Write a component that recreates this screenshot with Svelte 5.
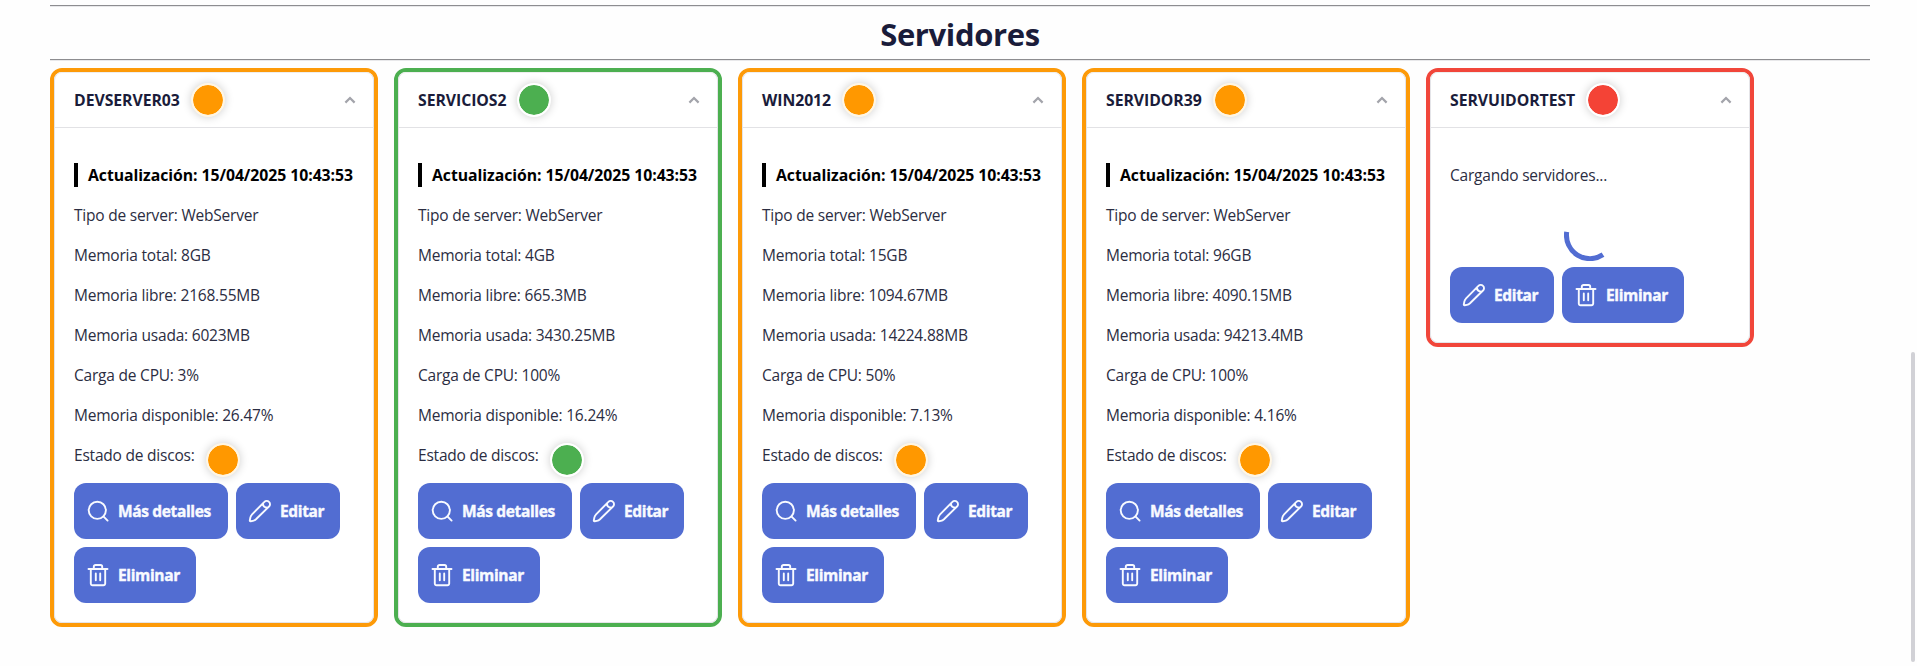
<script>
  const updated = '15/04/2025 10:43:53';
  const servers = [
    { name: 'DEVSERVER03', status: 'warn', total: '8GB', free: '2168.55MB', used: '6023MB', cpu: '3%', avail: '26.47%' },
    { name: 'SERVICIOS2', status: 'ok', total: '4GB', free: '665.3MB', used: '3430.25MB', cpu: '100%', avail: '16.24%' },
    { name: 'WIN2012', status: 'warn', total: '15GB', free: '1094.67MB', used: '14224.88MB', cpu: '50%', avail: '7.13%' },
    { name: 'SERVIDOR39', status: 'warn', total: '96GB', free: '4090.15MB', used: '94213.4MB', cpu: '100%', avail: '4.16%' },
    { name: 'SERVUIDORTEST', status: 'error', loading: true }
  ];
</script>

{#snippet button(kind, label)}
  <button class="btn {kind}">
    <svg viewBox="0 0 24 24" width="24" height="24">
      {#if kind === 'search'}
        <circle cx="11.3" cy="11.3" r="8.6" />
        <path d="M17.4 17.4 21.6 21.6" />
      {:else if kind === 'edit'}
        <path d="M16.4 2.9a3.1 3.1 0 0 1 4.6 0a3.1 3.1 0 0 1 0 4.6L8 20.3Q6.6 21.6 4.9 21.9L2.7 22.3Q1.7 22.4 1.8 21.4L2.4 18.4Q2.8 16.6 4.1 15.3Z M15 4.3Q14.9 8.6 19.6 8.8" />
      {:else}
        <path d="M2.5 6h19M4.8 6v14.6a1.7 1.7 0 0 0 1.7 1.7h11a1.7 1.7 0 0 0 1.7-1.7V6M7.8 6V3.7a1.7 1.7 0 0 1 1.7-1.7h5a1.7 1.7 0 0 1 1.7 1.7V6M9.8 10.4v6.8M14.2 10.4v6.8" />
      {/if}
    </svg>
    <span>{label}</span>
  </button>
{/snippet}

<main>
  <hr />
  <h1>Servidores</h1>
  <hr />
  <div class="grid">
    {#each servers as s}
      <section class="card {s.status}">
        <div class="inner">
          <header>
            <span class="name">{s.name}</span>
            <i class="dot"></i>
            <svg class="chevron" viewBox="0 0 12 8" width="12" height="8"><path d="M1.4 6.6 6 2l4.6 4.6" /></svg>
          </header>
          <div class="body">
            {#if s.loading}
              <p>Cargando servidores...</p>
              <div class="spinner">
                <svg viewBox="0 0 52 52" width="52" height="52"><path d="M2.7 22.8A23.5 23.5 0 0 0 39 45.7" /></svg>
              </div>
            {:else}
              <p class="update"><span>Actualización: {updated}</span></p>
              <p>Tipo de server: WebServer</p>
              <p>Memoria total: {s.total}</p>
              <p>Memoria libre: {s.free}</p>
              <p>Memoria usada: {s.used}</p>
              <p>Carga de CPU: {s.cpu}</p>
              <p>Memoria disponible: {s.avail}</p>
              <p class="disks">Estado de discos: <i class="dot"></i></p>
            {/if}
            <div class="actions">
              {#if !s.loading}{@render button('search', 'Más detalles')}{/if}
              {@render button('edit', 'Editar')}
              {@render button('trash', 'Eliminar')}
            </div>
          </div>
        </div>
      </section>
    {/each}
  </div>
  <div class="scrollbar"></div>
</main>

<style>
  :global(body) { background: #fefefe; overflow: hidden; }
  * { box-sizing: border-box; }
  main {
    height: 666px;
    padding: 5px 47px 0 50px;
    font-family: 'Segoe UI', 'Open Sans', 'Noto Sans', sans-serif;
    font-size: 16px;
    color: #2b2d42;
  }
  hr {
    height: 2px;
    margin: 0;
    border: 0;
    border-top: 1px solid #8d8d90;
    border-bottom: 1px solid #e8e8ea;
  }
  h1 {
    margin: 0;
    height: 52px;
    line-height: 54px;
    text-align: center;
    font-size: 31px;
    font-weight: 700;
    letter-spacing: -0.35px;
    color: #1a1c3a;
  }
  .grid { display: flex; align-items: flex-start; gap: 16px; margin-top: 7px; }
  .card {
    width: 328px;
    flex: none;
    border: 4px solid var(--c);
    border-radius: 12px;
    background: #fff;
  }
  .warn { --c: #fd9a08; --d: #ff9800; --ring: #fff6e4; }
  .ok { --c: #4caf50; --d: #4caf50; --ring: #fff; }
  .error { --c: #f1463a; --d: #f44336; --ring: #fff; }
  .inner { border: 1px solid #e4e4e8; border-top-color: #eee; border-radius: 8px; }
  header {
    height: 55px;
    display: flex;
    align-items: center;
    padding: 0 17px 0 19px;
    border-bottom: 1px solid #e2e2e5;
  }
  .name { font-weight: 700; color: #1a1c3a; font-size: 15.8px; letter-spacing: -0.06px; }
  .dot {
    flex: none;
    width: 34px;
    height: 34px;
    margin-left: 11px;
    border-radius: 50%;
    border: 2px solid var(--ring);
    background: var(--d);
    background-clip: padding-box;
    box-shadow: 0 0 10px rgba(0, 0, 0, 0.2);
  }
  svg { display: block; flex: none; fill: none; stroke-linecap: round; stroke-linejoin: round; }
  .chevron { margin-left: auto; stroke: #a3a4ab; stroke-width: 2.2; stroke-linecap: butt; stroke-linejoin: miter; }
  .body { padding: 27px 19px 19px; }
  p { margin: 0; height: 40px; line-height: 40px; font-size: 15.5px; letter-spacing: -0.21px; white-space: nowrap; }
  .update { display: flex; align-items: center; }
  .update span {
    height: 24px;
    line-height: 24px;
    border-left: 4px solid #000;
    padding-left: 10px;
    font-size: 15.8px;
    font-weight: 700;
    color: #000;
    letter-spacing: -0.06px;
  }
  .disks { display: flex; }
  .disks .dot { margin: 8px 0 0 11px; }
  .actions { display: flex; flex-wrap: wrap; gap: 8px; margin-top: 8px; }
  .spinner { display: flex; justify-content: center; height: 64px; padding-top: 14px; }
  .spinner path { stroke: #526dd2; stroke-width: 5; stroke-linecap: butt; }
  .btn {
    width: 121.6px;
    height: 56px;
    display: flex;
    align-items: center;
    gap: 8px;
    padding: 0 0 0 12px;
    border: 0;
    border-radius: 12px;
    background: #526dd2;
    color: #f8faff;
    font: 700 15.5px 'Segoe UI', 'Open Sans', 'Noto Sans', sans-serif;
    letter-spacing: -0.35px;
    -webkit-text-stroke: 0.4px #f8faff;
    white-space: nowrap;
  }
  .btn svg { stroke: #f8faff; stroke-width: 1.9; }
  .search { width: 154px; }
  .edit { width: 104px; }
  .scrollbar {
    position: absolute;
    left: 1911px;
    top: 352px;
    width: 4px;
    height: 310px;
    border-radius: 2px;
    background: #d1d1d6;
  }
</style>
